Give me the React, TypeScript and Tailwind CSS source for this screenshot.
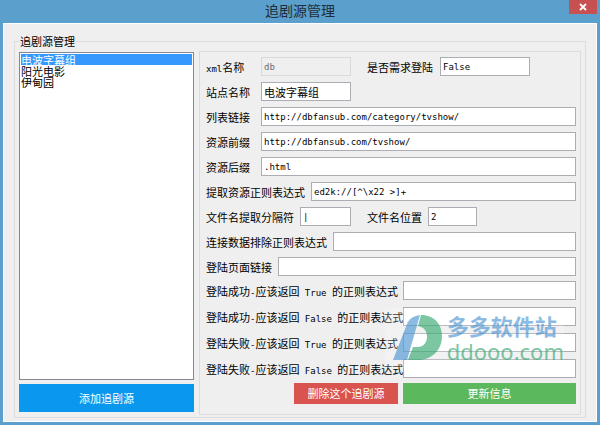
import React from 'react';

const labelClass = 'shrink-0 whitespace-nowrap leading-[18px]';
const inputClass =
  "h-[19px] min-w-0 border border-[#abadb3] bg-white px-[2px] font-['DejaVu_Sans_Mono','Noto_Sans_CJK_SC',monospace] text-[9px] text-black outline-none";

const sources = ['电波字幕组', '阳光电影', '伊甸园'];

const loginRules = [
  { id: 'ok-true', before: '登陆成功', value: 'True' },
  { id: 'ok-false', before: '登陆成功', value: 'False' },
  { id: 'fail-true', before: '登陆失败', value: 'True' },
  { id: 'fail-false', before: '登陆失败', value: 'False' },
];

// Latin part of a label, half as wide as the Chinese characters
const Mono: React.FC<{ children: React.ReactNode }> = ({ children }) => (
  <span className="font-['DejaVu_Sans_Mono',monospace] text-[9px] leading-none whitespace-pre">{children}</span>
);

const Watermark: React.FC = () => (
  <div className="pointer-events-none absolute right-[16px] bottom-[46px] flex items-center gap-1 bg-white/30 py-1 pl-2 opacity-70">
    <svg width="50" height="46" viewBox="0 0 50 46" aria-hidden="true">
      <path d="M27 0 C20 1 16 4 14 9 L0 45 H14 Z" fill="#5b9ed6" />
      <path d="M28 0 C42 0 49 10 49 21 C49 35 39 45 25 45 H15 L20 32 H24 C31 32 34 27 34 22 C34 15 30 12 25 11 Z" fill="#46b07c" />
    </svg>
    <div className="flex flex-col">
      <span className="text-[22px] leading-[26px] font-bold text-[#5b9ed6]">多多软件站</span>
      <span className="font-['Noto_Sans',sans-serif] text-[22px] leading-[26px] text-[#46b07c]">ddooo.com</span>
    </div>
  </div>
);

const App: React.FC = () => {
  return (
    <div className="flex min-h-screen flex-col bg-[#5b9fcc] px-[3px] pb-1 font-['Noto_Sans_CJK_SC',sans-serif] text-[11px] text-black">
      {/* Title bar */}
      <header className="relative flex h-[23px] items-start justify-center">
        <h1 className="text-[14px] leading-5 text-[#1f2d38]">追剧源管理</h1>
        <button type="button" aria-label="关闭" className="absolute top-0 right-0 flex h-[14px] w-7 items-center justify-center bg-[#c75050]">
          <svg width="8" height="8" viewBox="0 0 8 8" aria-hidden="true">
            <path d="M1 1 L7 7 M7 1 L1 7" stroke="#fff" strokeWidth="1.8" />
          </svg>
        </button>
      </header>

      <main className="flex flex-1 flex-col border border-white bg-[#efefef] px-[10px] pt-[9px] pb-[3px]">
        <fieldset className="flex min-w-0 flex-1 gap-[5px] border border-[#dcdcdc] px-1 pb-[2px]">
          <legend className="px-[1px] leading-4">追剧源管理</legend>

          {/* Source list */}
          <div className="flex w-[175px] shrink-0 flex-col gap-1 pt-[3px] pb-[3px]">
            <select
              size={3}
              defaultValue={sources[0]}
              aria-label="追剧源"
              className="w-full flex-1 overflow-hidden border border-[#828790] bg-white p-[1px] text-[11px] outline-none"
            >
              {sources.map((name) => (
                <option
                  key={name}
                  value={name}
                  className="flex h-[11px] min-h-0 items-center p-0 text-black checked:bg-[#3399ff] checked:bg-[linear-gradient(#3399ff,#3399ff)] checked:text-white"
                >
                  {name}
                </option>
              ))}
            </select>
            <button type="button" className="h-7 bg-[#0a97ee] text-white">添加追剧源</button>
          </div>

          {/* Source details */}
          <form className="relative mt-[2px] flex min-w-0 flex-1 flex-col border border-[#dcdcdc] pt-[5px] pr-[4px] pb-[10px] pl-[6px]" onSubmit={(e) => e.preventDefault()}>
            <div className="flex flex-col gap-[6px]">
              <div className="flex items-center">
                <label htmlFor="xml" className={`${labelClass} w-[55px]`}><Mono>xml</Mono>名称</label>
                <input id="xml" disabled defaultValue="db" className="h-[19px] w-[90px] border border-[#d9d9d9] bg-[#efefef] px-[2px] font-['DejaVu_Sans_Mono',monospace] text-[9px] text-[#6d6d6d]" />
                <label htmlFor="need-login" className={`${labelClass} ml-4 w-[73px]`}>是否需求登陆</label>
                <input id="need-login" defaultValue="False" className={`${inputClass} w-[90px]`} />
              </div>
              <div className="flex items-center">
                <label htmlFor="site" className={`${labelClass} w-[55px]`}>站点名称</label>
                <input id="site" defaultValue="电波字幕组" className="h-[19px] w-[90px] border border-[#abadb3] bg-white px-[2px] text-[11px] outline-none" />
              </div>
              <div className="flex items-center">
                <label htmlFor="list-url" className={`${labelClass} w-[55px]`}>列表链接</label>
                <input id="list-url" defaultValue="http://dbfansub.com/category/tvshow/" className={`${inputClass} flex-1`} />
              </div>
              <div className="flex items-center">
                <label htmlFor="prefix" className={`${labelClass} w-[55px]`}>资源前缀</label>
                <input id="prefix" defaultValue="http://dbfansub.com/tvshow/" className={`${inputClass} flex-1`} />
              </div>
              <div className="flex items-center">
                <label htmlFor="suffix" className={`${labelClass} w-[55px]`}>资源后缀</label>
                <input id="suffix" defaultValue=".html" className={`${inputClass} flex-1`} />
              </div>
              <div className="flex items-center gap-[6px]">
                <label htmlFor="extract" className={labelClass}>提取资源正则表达式</label>
                <input id="extract" defaultValue="ed2k://[^\x22 >]+" className={`${inputClass} flex-1`} />
              </div>
              <div className="flex items-center gap-[6px]">
                <label htmlFor="separator" className={labelClass}>文件名提取分隔符</label>
                <input id="separator" defaultValue="|" className={`${inputClass} w-[51px]`} />
                <label htmlFor="position" className={`${labelClass} ml-[10px]`}>文件名位置</label>
                <input id="position" defaultValue="2" className={`${inputClass} w-[49px]`} />
              </div>
              <div className="flex items-center gap-[6px]">
                <label htmlFor="exclude" className={labelClass}>连接数据排除正则表达式</label>
                <input id="exclude" className={`${inputClass} flex-1`} />
              </div>
              <div className="flex items-center gap-[6px]">
                <label htmlFor="login-url" className={labelClass}>登陆页面链接</label>
                <input id="login-url" className={`${inputClass} flex-1`} />
              </div>
            </div>

            <div className="mt-[5px] flex flex-col gap-[7px]">
              {loginRules.map((rule) => (
                <div key={rule.id} className="flex items-center">
                  <label htmlFor={rule.id} className={`${labelClass} w-[197px]`}>
                    {rule.before}<Mono>-</Mono>应该返回<Mono>{` ${rule.value} `}</Mono>的正则表达式
                  </label>
                  <input id={rule.id} className={`${inputClass} flex-1`} />
                </div>
              ))}
            </div>

            <div className="mt-[5px] flex justify-end gap-[5px]">
              <button type="button" className="h-[21px] w-[104px] bg-[#d9534f] text-white">删除这个追剧源</button>
              <button type="submit" className="h-[21px] w-[173px] bg-[#5cb85c] text-white">更新信息</button>
            </div>

            <Watermark />
          </form>
        </fieldset>
      </main>
    </div>
  );
};

export default App;
